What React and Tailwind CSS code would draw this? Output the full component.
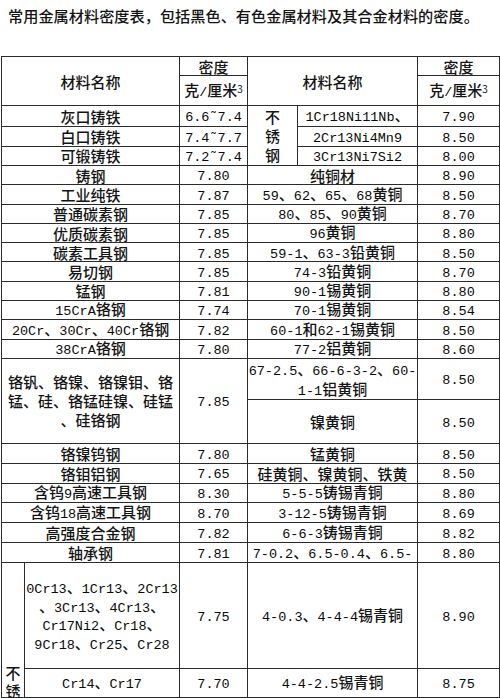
import React from "react";

const MONO = "font-['Liberation_Mono','DejaVu_Sans_Mono',monospace] text-[13.5px] leading-none text-[#0a0a0a]";

function T({ s }) {
  const parts = s.split(/([!-~\u02DC]+)/);
  return (
    <>
      {parts.map((p, i) =>
        /^[!-~\u02DC]+$/.test(p) ? (
          <span key={i} className={MONO}>
            {p}
          </span>
        ) : (
          <React.Fragment key={i}>{p}</React.Fragment>
        )
      )}
    </>
  );
}

function Lines({ lines, lh = "leading-[19px]" }) {
  return (
    <>
      {lines.map((l, i) => (
        <div key={i} className={lh}>
          <T s={l} />
        </div>
      ))}
    </>
  );
}

const C = "border border-[#2b2b2b] p-0 text-center align-middle whitespace-nowrap leading-[15px]";

function Unit() {
  return (
    <span>
      克<span className={MONO}>/</span>厘米
      <sup className="text-[10px] leading-none relative -top-[3px] font-normal">3</sup>
    </span>
  );
}

function Row({ h, a, b, c, d }) {
  return (
    <tr className={h}>
      <td colSpan={2} className={C}>
        <T s={a} />
      </td>
      <td className={C}>
        <T s={b} />
      </td>
      <td colSpan={2} className={C}>
        <T s={c} />
      </td>
      <td className={C}>
        <T s={d} />
      </td>
    </tr>
  );
}

export default function App() {
  return (
    <div className="w-[500px] h-[698px] overflow-hidden bg-white text-[#141414] font-medium font-['Noto_Sans_CJK_SC',sans-serif]">
      <div className="h-[56px] pt-[6px] pl-[8px] text-[15.2px] leading-[18px] whitespace-nowrap">
        常用金属材料密度表，包括黑色、有色金属材料及其合金材料的密度。
      </div>
      <table className="table-fixed border-collapse ml-[1px] w-[498px] text-[15px]">
        <colgroup>
          <col className="w-[23px]" />
          <col className="w-[155px]" />
          <col className="w-[68px]" />
          <col className="w-[50px]" />
          <col className="w-[120px]" />
          <col className="w-[82px]" />
        </colgroup>
        <tbody>
          <tr className="h-[19px]">
            <td colSpan={2} rowSpan={2} className={C}>
              材料名称
            </td>
            <td className={C}>密度</td>
            <td colSpan={2} rowSpan={2} className={C}>
              材料名称
            </td>
            <td className={C}>密度</td>
          </tr>
          <tr className="h-[30px]">
            <td className={C}>
              <Unit />
            </td>
            <td className={C}>
              <Unit />
            </td>
          </tr>
          <tr className="h-[21px]">
            <td colSpan={2} className={C}>
              灰口铸铁
            </td>
            <td className={C}>
              <T s={"6.6\u02DC7.4"} />
            </td>
            <td rowSpan={3} className={C}>
              <Lines lines={["不", "锈", "钢"]} />
            </td>
            <td className={C}>
              <T s="1Cr18Ni11Nb、" />
            </td>
            <td className={C}>
              <T s="7.90" />
            </td>
          </tr>
          <tr className="h-[19.5px]">
            <td colSpan={2} className={C}>
              白口铸铁
            </td>
            <td className={C}>
              <T s={"7.4\u02DC7.7"} />
            </td>
            <td className={C}>
              <T s="2Cr13Ni4Mn9" />
            </td>
            <td className={C}>
              <T s="8.50" />
            </td>
          </tr>
          <tr className="h-[19.5px]">
            <td colSpan={2} className={C}>
              可锻铸铁
            </td>
            <td className={C}>
              <T s={"7.2\u02DC7.4"} />
            </td>
            <td className={C}>
              <T s="3Cr13Ni7Si2" />
            </td>
            <td className={C}>
              <T s="8.00" />
            </td>
          </tr>
          <Row h="h-[19.3px]" a="铸钢" b="7.80" c="纯铜材" d="8.90" />
          <Row h="h-[19.3px]" a="工业纯铁" b="7.87" c="59、62、65、68黄铜" d="8.50" />
          <Row h="h-[19.3px]" a="普通碳素钢" b="7.85" c="80、85、90黄铜" d="8.70" />
          <Row h="h-[19.3px]" a="优质碳素钢" b="7.85" c="96黄铜" d="8.80" />
          <Row h="h-[19.3px]" a="碳素工具钢" b="7.85" c="59-1、63-3铅黄铜" d="8.50" />
          <Row h="h-[19.3px]" a="易切钢" b="7.85" c="74-3铅黄铜" d="8.70" />
          <Row h="h-[19.3px]" a="锰钢" b="7.81" c="90-1锡黄铜" d="8.80" />
          <Row h="h-[19.3px]" a="15CrA铬钢" b="7.74" c="70-1锡黄铜" d="8.54" />
          <Row h="h-[19.3px]" a="20Cr、30Cr、40Cr铬钢" b="7.82" c="60-1和62-1锡黄铜" d="8.50" />
          <Row h="h-[19.3px]" a="38CrA铬钢" b="7.80" c="77-2铝黄铜" d="8.60" />
          <tr className="h-[41px]">
            <td colSpan={2} rowSpan={2} className={C}>
              <Lines lines={["铬钒、铬镍、铬镍钼、铬", "锰、硅、铬锰硅镍、硅锰", "、硅铬钢"]} />
            </td>
            <td rowSpan={2} className={C}>
              <T s="7.85" />
            </td>
            <td colSpan={2} className={C}>
              <Lines lines={["67-2.5、66-6-3-2、60-", "1-1铝黄铜"]} />
            </td>
            <td className={C}>
              <T s="8.50" />
            </td>
          </tr>
          <tr className="h-[44px]">
            <td colSpan={2} className={C}>
              镍黄铜
            </td>
            <td className={C}>
              <T s="8.50" />
            </td>
          </tr>
          <Row h="h-[19.8px]" a="铬镍钨钢" b="7.80" c="锰黄铜" d="8.50" />
          <Row h="h-[19.8px]" a="铬钼铝钢" b="7.65" c="硅黄铜、镍黄铜、铁黄" d="8.50" />
          <Row h="h-[19.8px]" a="含钨9高速工具钢" b="8.30" c="5-5-5铸锡青铜" d="8.80" />
          <Row h="h-[19.8px]" a="含钨18高速工具钢" b="8.70" c="3-12-5铸锡青铜" d="8.69" />
          <Row h="h-[19.8px]" a="高强度合金钢" b="7.82" c="6-6-3铸锡青铜" d="8.82" />
          <Row h="h-[19.8px]" a="轴承钢" b="7.81" c="7-0.2、6.5-0.4、6.5-" d="8.80" />
          <tr className="h-[106px]">
            <td rowSpan={2} className={C + " !align-bottom"}>
              <div className="translate-y-[3px]">
                <Lines lines={["不", "锈"]} lh="leading-[18px]" />
              </div>
            </td>
            <td className={C}>
              <Lines lines={["0Cr13、1Cr13、2Cr13", "、3Cr13、4Cr13、", "Cr17Ni2、Cr18、", "9Cr18、Cr25、Cr28"]} lh="leading-[18.5px]" />
            </td>
            <td className={C}>
              <T s="7.75" />
            </td>
            <td colSpan={2} className={C}>
              <T s="4-0.3、4-4-4锡青铜" />
            </td>
            <td className={C}>
              <T s="8.90" />
            </td>
          </tr>
          <tr className="h-[29px]">
            <td className={C}>
              <T s="Cr14、Cr17" />
            </td>
            <td className={C}>
              <T s="7.70" />
            </td>
            <td colSpan={2} className={C}>
              <T s="4-4-2.5锡青铜" />
            </td>
            <td className={C}>
              <T s="8.75" />
            </td>
          </tr>
        </tbody>
      </table>
    </div>
  );
}
